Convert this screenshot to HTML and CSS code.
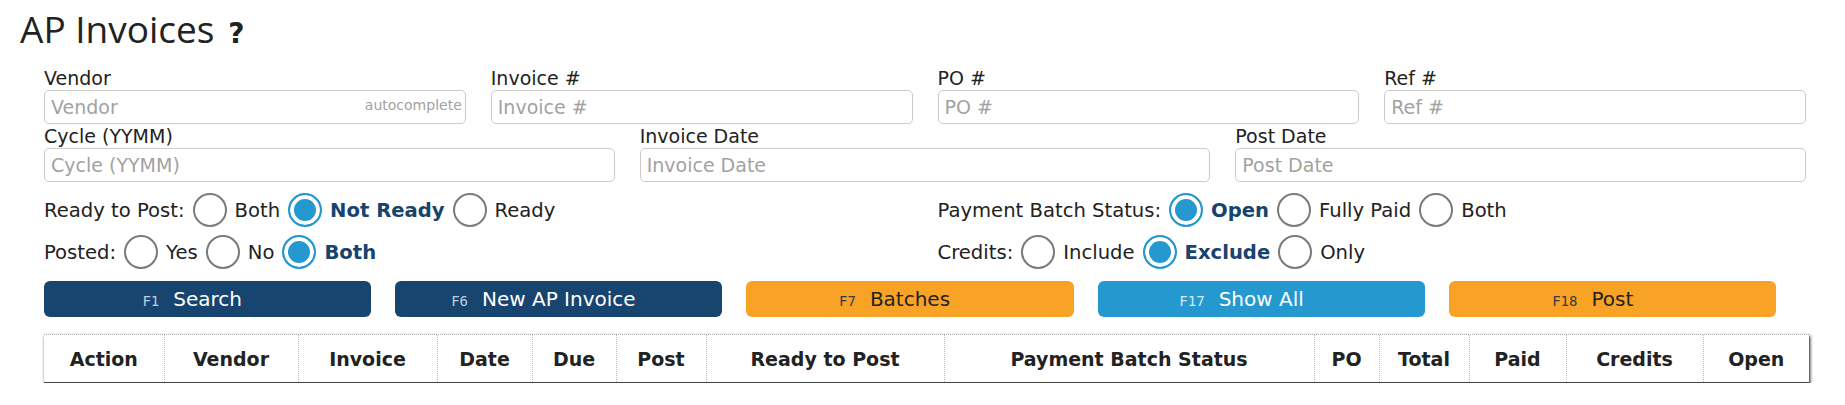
FILE: index.html
```html
<!DOCTYPE html>
<html lang="en">
<head>
  <meta charset="UTF-8">
  <title>AP Invoices</title>
  <link rel="stylesheet" href="styles.css">
</head>
<body>
  <div class="page">
    <h1 class="title">AP Invoices <span class="help">?</span></h1>

    <form class="filters">
      <div class="row row-4">
        <div class="field">
          <label>Vendor</label>
          <div class="input-wrap">
            <input type="text" placeholder="Vendor">
            <span class="hint">autocomplete</span>
          </div>
        </div>
        <div class="field">
          <label>Invoice #</label>
          <input type="text" placeholder="Invoice #">
        </div>
        <div class="field">
          <label>PO #</label>
          <input type="text" placeholder="PO #">
        </div>
        <div class="field">
          <label>Ref #</label>
          <input type="text" placeholder="Ref #">
        </div>
      </div>

      <div class="row row-3">
        <div class="field">
          <label>Cycle (YYMM)</label>
          <input type="text" placeholder="Cycle (YYMM)">
        </div>
        <div class="field">
          <label>Invoice Date</label>
          <input type="text" placeholder="Invoice Date">
        </div>
        <div class="field">
          <label>Post Date</label>
          <input type="text" placeholder="Post Date">
        </div>
      </div>

      <div class="radios">
        <div class="radio-row">
          <span>Ready to Post:</span>
          <span class="radio"></span><span class="choice">Both</span>
          <span class="radio on"></span><span class="choice on">Not Ready</span>
          <span class="radio"></span><span class="choice">Ready</span>
        </div>
        <div class="radio-row">
          <span>Payment Batch Status:</span>
          <span class="radio on"></span><span class="choice on">Open</span>
          <span class="radio"></span><span class="choice">Fully Paid</span>
          <span class="radio"></span><span class="choice">Both</span>
        </div>
        <div class="radio-row">
          <span>Posted:</span>
          <span class="radio"></span><span class="choice">Yes</span>
          <span class="radio"></span><span class="choice">No</span>
          <span class="radio on"></span><span class="choice on">Both</span>
        </div>
        <div class="radio-row">
          <span>Credits:</span>
          <span class="radio"></span><span class="choice">Include</span>
          <span class="radio on"></span><span class="choice on">Exclude</span>
          <span class="radio"></span><span class="choice">Only</span>
        </div>
      </div>
    </form>

    <div class="actions">
      <button class="btn btn-dark" type="button"><span class="key">F1</span><span>Search</span></button>
      <button class="btn btn-dark" type="button"><span class="key">F6</span><span>New AP Invoice</span></button>
      <button class="btn btn-orange" type="button"><span class="key">F7</span><span>Batches</span></button>
      <button class="btn btn-blue" type="button"><span class="key">F17</span><span>Show All</span></button>
      <button class="btn btn-orange" type="button"><span class="key">F18</span><span>Post</span></button>
    </div>

    <div class="grid-wrap">
      <table class="grid">
        <thead>
          <tr>
            <th>Action</th>
            <th>Vendor</th>
            <th>Invoice</th>
            <th>Date</th>
            <th>Due</th>
            <th>Post</th>
            <th>Ready to Post</th>
            <th>Payment Batch Status</th>
            <th>PO</th>
            <th>Total</th>
            <th>Paid</th>
            <th>Credits</th>
            <th>Open</th>
          </tr>
        </thead>
      </table>
    </div>
  </div>
</body>
</html>
```

FILE: styles.css
```css
* {
  box-sizing: border-box;
}

:root {
  --text: #222;
  --muted: #a2a2a2;
  --border: #cccccc;
  --dark-blue: #174570;
  --orange: #f9a326;
  --blue: #2598cf;
  --radio-off: #7a7a7a;
}

body {
  margin: 0;
  font-family: "DejaVu Sans", sans-serif;
  font-size: 19px;
  color: var(--text);
  background: #fff;
}

.title {
  margin: 0 0 9px 20px;
  font: 400 37px/57px "Open Sans", sans-serif;
}

.help {
  font: 700 28px "DejaVu Sans", sans-serif;
  margin-left: 4px;
}

.filters {
  margin: 0 39px 0 44px;
}

.row {
  display: grid;
  column-gap: 25px;
}

.row-4 {
  grid-template-columns: repeat(4, 1fr);
}

.row-3 {
  grid-template-columns: repeat(3, 1fr);
}

.field label {
  display: block;
  line-height: 24px;
}

.field input {
  display: block;
  width: 100%;
  height: 34px;
  padding: 0 6px;
  border: 1px solid var(--border);
  border-radius: 5px;
  font: inherit;
  color: var(--text);
  background: #fff;
}

.field input::placeholder {
  color: var(--muted);
}

.input-wrap {
  position: relative;
}

.hint {
  position: absolute;
  right: 4px;
  top: 7px;
  font-size: 14px;
  color: var(--muted);
}

.radios {
  display: grid;
  grid-template-columns: repeat(4, 1fr);
  column-gap: 25px;
  margin-top: 7px;
  font-size: 19.6px;
}

.radio-row {
  grid-column: span 2;
  display: flex;
  align-items: center;
  gap: 8px;
  height: 42px;
}

.radio {
  flex: none;
  width: 34px;
  height: 34px;
  border-radius: 50%;
  border: 2px solid var(--radio-off);
  background: #fff;
}

.radio.on {
  border-color: var(--blue);
  background: var(--blue);
  box-shadow: inset 0 0 0 4px #fff;
}

.choice.on {
  font-weight: bold;
  color: #17446d;
}

.actions {
  display: grid;
  grid-template-columns: repeat(5, 1fr);
  gap: 24px;
  margin: 8px 69px 0 44px;
}

.btn {
  display: grid;
  grid-template-columns: 1fr auto 1fr;
  align-items: baseline;
  height: 36px;
  padding: 0;
  border: 0;
  border-radius: 6px;
  font: inherit;
  font-size: 20px;
  line-height: 36px;
}

.btn .key {
  justify-self: end;
  margin-right: 14px;
  font: 14px/36px "DejaVu Sans Mono", monospace;
}

.btn-dark {
  background: var(--dark-blue);
  color: #fff;
}

.btn-dark .key {
  color: #b9cde0;
}

.btn-orange {
  background: var(--orange);
  color: #222;
}

.btn-orange .key {
  color: #3a3a3a;
}

.btn-blue {
  background: var(--blue);
  color: #fff;
}

.btn-blue .key {
  color: #d3e8f4;
}

.grid-wrap {
  margin: 17px 0 0 44px;
  width: 1765px;
  border-top: 1px dotted #aaa;
  border-bottom: 1px solid #444;
  box-shadow: 1px 2px 3px #111;
}

.grid {
  width: 100%;
  table-layout: fixed;
  border-collapse: collapse;
}

.grid th {
  height: 47px;
  padding: 0;
  font-size: 19px;
  font-weight: bold;
  text-align: center;
  border-left: 1px dotted #bbb;
}

.grid th:first-child {
  border-left: 0;
  width: 120px;
}

.grid th:nth-child(2) { width: 134px; }
.grid th:nth-child(3) { width: 139px; }
.grid th:nth-child(4) { width: 95px; }
.grid th:nth-child(5) { width: 84px; }
.grid th:nth-child(6) { width: 90px; }
.grid th:nth-child(7) { width: 238px; }
.grid th:nth-child(8) { width: 370px; }
.grid th:nth-child(9) { width: 65px; }
.grid th:nth-child(10) { width: 90px; }
.grid th:nth-child(11) { width: 97px; }
.grid th:nth-child(12) { width: 137px; }
.grid th:nth-child(13) { width: 106px; }
```
